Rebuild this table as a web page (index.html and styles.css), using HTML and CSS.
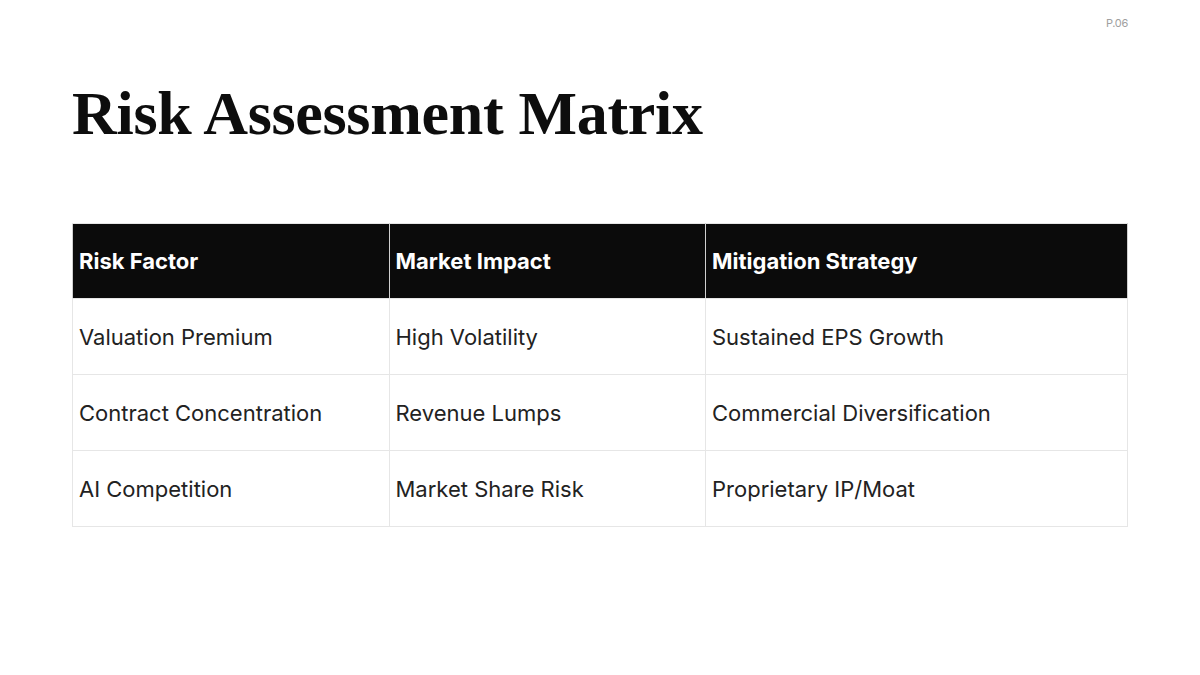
FILE: index.html
```html
<!DOCTYPE html>
<html lang="en">
<head>
<meta charset="utf-8">
<title>Risk Assessment Matrix</title>
<link rel="stylesheet" href="styles.css">
</head>
<body>
<div class="slide">
  <div class="page-num">P.06</div>
  <h1 class="title">Risk Assessment Matrix</h1>
  <table class="matrix">
    <colgroup>
      <col class="c-narrow"><col class="c-narrow"><col class="c-wide">
    </colgroup>
    <thead>
      <tr><th>Risk Factor</th><th>Market Impact</th><th>Mitigation Strategy</th></tr>
    </thead>
    <tbody>
      <tr><td>Valuation Premium</td><td>High Volatility</td><td>Sustained EPS Growth</td></tr>
      <tr><td>Contract Concentration</td><td>Revenue Lumps</td><td>Commercial Diversification</td></tr>
      <tr><td>AI Competition</td><td>Market Share Risk</td><td>Proprietary IP/Moat</td></tr>
    </tbody>
  </table>
</div>
</body>
</html>
```
FILE: styles.css
```css
html, body {
  margin: 0;
  padding: 0;
  background: #ffffff;
}
.slide {
  width: 1200px;
  height: 675px;
  box-sizing: border-box;
  padding: 16px 72px 0 72px;
  display: flex;
  flex-direction: column;
  font-family: Inter, "Liberation Sans", sans-serif;
  color: #1a1a1a;
}
.page-num {
  align-self: flex-end;
  font-size: 11px;
  color: #a0a0a0;
  letter-spacing: -0.3px;
  line-height: 14px;
}
.title {
  margin: 53px 0 0 0;
  font-family: "Liberation Serif", "DejaVu Serif", serif;
  font-weight: 700;
  font-size: 62px;
  line-height: 60px;
  letter-spacing: -0.3px;
  color: #0d0d0d;
}
.matrix {
  margin-top: 80px;
  width: 1056px;
  border-collapse: collapse;
  table-layout: fixed;
}
.c-narrow { width: 30%; }
.c-wide { width: 40%; }
.matrix th, .matrix td {
  border: 1px solid #e6e6e6;
  text-align: left;
  padding: 0 6px;
  font-size: 22px;
  box-sizing: border-box;
}
.matrix th {
  height: 75px;
  background: #0b0b0b;
  color: #ffffff;
  font-weight: 700;
  border-left-color: #d0d0d0;
  border-right-color: #d0d0d0;
}
.matrix td {
  height: 76px;
  color: #222222;
  font-weight: 400;
}
```
